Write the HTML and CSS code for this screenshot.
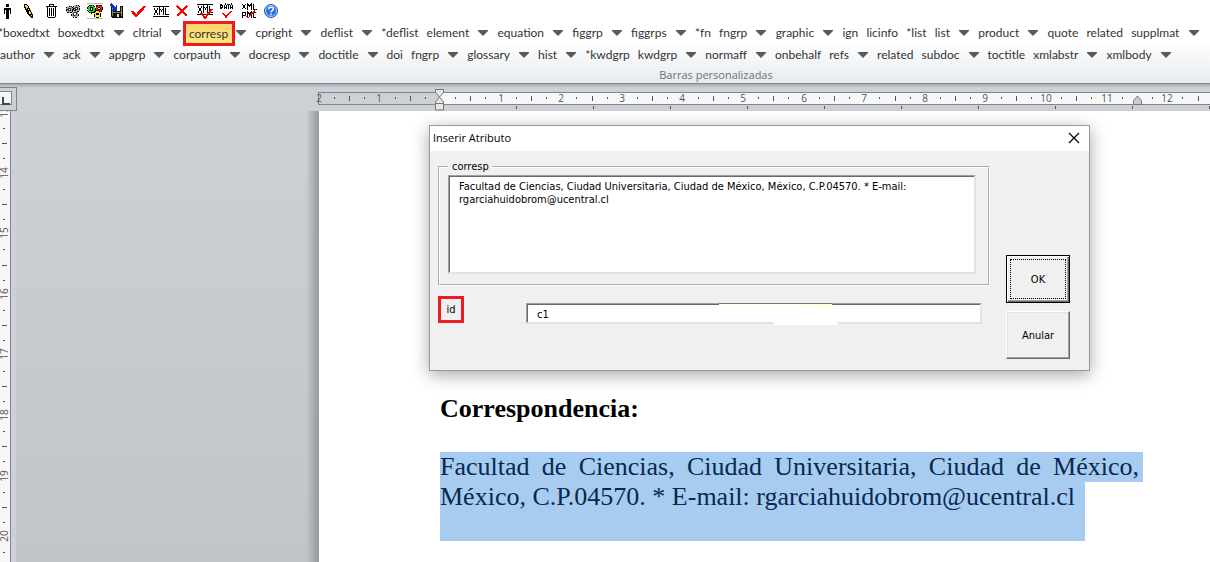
FILE: index.html
```html
<!DOCTYPE html>
<html lang="es">
<head>
<meta charset="utf-8">
<title>Inserir Atributo</title>
<link rel="stylesheet" href="styles.css">
</head>
<body>
<header class="ribbon">
  <div class="icons">
    <button aria-label="Persona"><svg viewBox="0 0 16 16"><path d="M7 1h3v3h-3zM5 5h7v6h-1v-4h-1v9h-3v-9h-1v4h-1z" fill="#000"/></svg></button>
    <button aria-label="Lápiz"><svg viewBox="0 0 16 16"><path d="M3 1h3l2 3 2 4 2 4v3h-2l-3-3-2-4-2-4z" fill="#000"/><path d="M4 2h2l2 4 2 4 1 3-2-1-2-4-2-3z" fill="#f5dc3c"/><path d="M5 7l3-2M6 9l3-2M9 12l2-1" stroke="#000"/></svg></button>
    <button aria-label="Borrar"><svg viewBox="0 0 16 16"><path d="M6.500 2.500v-1h4v1M3 3.500h11M4.500 4v9.500l1 1h6l1-1V4M6.500 5v8M8.500 5v8M10.500 5v8" fill="none" stroke="#000"/></svg></button>
    <button aria-label="Procesos"><svg viewBox="0 0 16 16"><g fill="#aaa" stroke="#000" stroke-dasharray="2 1"><circle cx="4.500" cy="6.500" r="3.500"/><circle cx="11.500" cy="5.500" r="3.500"/><circle cx="10" cy="11" r="3.500"/></g><g fill="#eee" stroke="#333"><circle cx="4.500" cy="6.500" r="1.500"/><circle cx="11.500" cy="5.500" r="1.500"/><circle cx="10" cy="11" r="1.500"/></g></svg></button>
    <button aria-label="Procesar"><svg viewBox="0 0 16 16"><path d="M0 .5h16M0 15.500h16" stroke="#b8b8b8"/><g stroke="#000" stroke-dasharray="3 1"><circle cx="4.500" cy="6" r="4" fill="#18d818"/><circle cx="12" cy="5.500" r="3.500" fill="#f01818"/><circle cx="10.500" cy="11" r="3.500" fill="#ffe51a"/></g><g fill="#fff" stroke="#000"><circle cx="4.500" cy="6" r="1.500"/><circle cx="12" cy="5.500" r="1.200"/><circle cx="10.500" cy="11" r="1"/></g></svg></button>
    <button aria-label="Guardar"><svg viewBox="0 0 16 16"><path d="M2 3h12v12h-11l-1-1z" fill="#111"/><path d="M5 3h6v5h-6z" fill="#fff"/><path d="M3 4h1v9h-1zM12 4h1v9h-1zM4 9h8v1h-8z" fill="#8c8c28"/><path d="M8 11h2v3h-2z" fill="#ddd"/><path d="M2 0l5 4V2h1v6H3V7h2L1 2z" fill="#1030d8"/></svg></button>
    <button aria-label="Validar"><svg viewBox="0 0 16 16"><path d="M1 8l4 5L14 3" fill="none" stroke="#f00" stroke-width="2.500"/></svg></button>
    <button aria-label="XML"><svg viewBox="0 0 16 16"><path d="M0 3.500h16M0 13.500h16M1 5l4 7M5 5l-4 7M6.500 12V5l2 3 2-3v7M12.500 5v6.500H16" fill="none" stroke="#000"/></svg></button>
    <button aria-label="Cancelar"><svg viewBox="0 0 16 16"><path d="M2 3l10 10M12 3L2 13" stroke="#f00" stroke-width="1.500"/></svg></button>
    <button aria-label="Validar XML"><svg viewBox="0 0 16 16"><path d="M0 1.500h16M0 11.500h16M1 3l4 7M5 3l-4 7M6.500 10V3l2 3 2-3v7M12.500 3v6.500H16" fill="none" stroke="#000"/><path d="M4 10l4 5 7-9" fill="none" stroke="#f00" stroke-width="2"/></svg></button>
    <button aria-label="Validar datos"><svg viewBox="0 0 16 16"><path d="M1.500 1v5M1 1.500h1l1 1v2l-1 1h-1M5.500 6V3l1-2 1 2v3M5 4.500h3M8 1.500h3M9.500 1v5M11.500 6V3l1-2 1 2v3M11 4.500h3" fill="none" stroke="#000"/><path d="M4 10l3 4 5-6" fill="none" stroke="#f00" stroke-width="1.500"/></svg></button>
    <button aria-label="XML PMC"><svg viewBox="0 0 16 16"><path d="M1 1l4 5M5 1L1 6M6.500 6.500V1l2 2 2-2v5.500M12.500 1v5.500H16M1.500 15V9H4v3H2M6.500 15V9l2 2 2-2v6M15 9.500h-2.500v5H15" fill="none" stroke="#000"/><path d="M4 12l3 3 8-9" fill="none" stroke="#f00" stroke-width="1.200"/></svg></button>
    <button aria-label="Ayuda"><svg class="smooth" viewBox="0 0 16 16"><circle cx="8" cy="8" r="6.500" fill="#2873d9" stroke="#1c54b4"/><circle cx="8" cy="8" r="5.500" fill="none" stroke="#b4d4ff"/><path d="M5.800 6.300c0-3 4.500-2.700 4.500-.2 0 1.700-2.200 1.500-2.200 3.400M8 10.700v1.500" fill="none" stroke="#fff" stroke-width="1.500"/></svg></button>
  </div>
  <nav class="tags tags-first" data-tags="*boxedtxt boxedtxt+ cltrial+ corresp+ cpright+ deflist+ *deflist element+ equation+ figgrp+ figgrps+ *fn fngrp+ graphic+ ign licinfo *list list+ product+ quote related supplmat+"></nav>
  <nav class="tags tags-second" data-tags="author+ ack+ appgrp+ corpauth+ docresp+ doctitle+ doi fngrp+ glossary+ hist+ *kwdgrp kwdgrp+ normaff+ onbehalf refs+ related subdoc+ toctitle xmlabstr+ xmlbody+"></nav>
  <div class="group-name">Barras personalizadas</div>
</header>
<main class="workspace">
  <div class="ruler-row">
    <div class="corner"><button class="tab-kind" aria-label="Tabulación izquierda"></button></div>
    <svg class="ruler-h" id="ruler-h"></svg>
  </div>
  <div class="sheet-row">
    <svg class="ruler-v" id="ruler-v"></svg>
    <div class="backdrop"></div>
    <article class="page">
      <h1>Correspondencia:</h1>
      <p><span class="selected line-full">Facultad de Ciencias, Ciudad Universitaria, Ciudad de México,</span><span class="selected line-last">México, C.P.04570. * E-mail: rgarciahuidobrom@ucentral.cl</span></p>
    </article>
  </div>
</main>
<form class="dialog" role="dialog" aria-labelledby="dialog-title">
  <div class="title-bar">
    <span id="dialog-title">Inserir Atributo</span>
    <button type="button" class="close" aria-label="Cerrar"><svg viewBox="0 0 12 12"><path d="M1 1l10 10M11 1L1 11" stroke="#000" stroke-width="1.200"/></svg></button>
  </div>
  <div class="dialog-body">
    <div class="fields">
      <fieldset>
        <legend>corresp</legend>
        <textarea aria-label="corresp">Facultad de Ciencias, Ciudad Universitaria, Ciudad de México, México, C.P.04570. * E-mail: rgarciahuidobrom@ucentral.cl</textarea>
      </fieldset>
      <div class="attribute">
        <label for="attr-id">id</label>
        <div class="entry"><input id="attr-id" type="text" value="c1"><svg class="smudge" viewBox="0 0 120 22"><path d="M0 1h113v5h-9l-24-4H0z" fill="#ffffe1"/><path d="M0 .5h113" stroke="#77776a"/><path d="M55 19h64v3H55z" fill="#fff"/></svg></div>
      </div>
    </div>
    <div class="actions">
      <button type="submit" class="push default"><span>OK</span></button>
      <button type="button" class="push"><span>Anular</span></button>
    </div>
  </div>
</form>
<script src="app.js"></script>
</body>
</html>
```
FILE: styles.css
```css
* { box-sizing: border-box; }
body {
  margin: 0;
  height: 100vh;
  display: flex;
  flex-direction: column;
  overflow: hidden;
  font-family: "Open Sans", "Noto Sans", sans-serif;
  font-size: 11px;
  color: #333;
}
button { border: 0; padding: 0; background: none; font: inherit; color: inherit; }
svg { display: block; }

.ribbon {
  flex: none;
  background: linear-gradient(#fff 0, #fff 50%, #e7eaee 100%);
  border-bottom: 1px solid #81868f;
}
.icons { display: flex; gap: 8px; height: 22px; align-items: center; }
.icons button { width: 14px; display: flex; justify-content: center; }
.icons svg { width: 16px; height: 16px; flex: none; shape-rendering: crispEdges; }
.icons .smooth { shape-rendering: auto; }

.tags { display: flex; height: 22px; align-items: center; justify-content: space-between; white-space: nowrap; font-family: Lato, "Open Sans", sans-serif; font-size: 12px; }
.tags-first { margin-left: -2px; padding-right: 6px; }
.tags-second { padding-right: 34px; }
.tag { padding: 0 4px; line-height: 20px; }
.tag:first-child { padding-left: 0; }
.drop { padding: 0 5px; }
.drop svg { width: 10px; height: 6px; }
.tag-active {
  border: 3px solid #ed1c24;
  padding: 0 4px 0 3px;
  line-height: 19px;
  margin: 0 -4px 0 -3px;
  background: linear-gradient(#fbd46e, #ffe97c);
}
.group-name { height: 17px; line-height: 17px; padding-left: 222px; text-align: center; color: #6b727d; }

.workspace {
  flex: 1;
  display: flex;
  flex-direction: column;
  min-height: 0;
  background: linear-gradient(#a9adb3 0, #cdd0d5 4px, #cdd0d5 20px, #c1c5ca 100%);
}
.ruler-row { display: flex; justify-content: space-between; padding-top: 3px; height: 27px; flex: none; }
.corner { width: 17px; border: 1px solid #7f858e; border-left: 0; padding: 3px 4px 5px 0; flex: none; }
.tab-kind { display: block; width: 12px; height: 14px; border: 1px solid #7f858e; border-left: 0; background: #f7f7f7; position: relative; }
.tab-kind::after { content: ""; position: absolute; left: 2px; top: 5px; width: 6px; height: 6px; border: solid #444; border-width: 0 0 2px 2px; }
.ruler-h { flex: 1; margin-left: 301px; height: 24px; overflow: visible; }
.sheet-row { flex: 1; display: flex; min-height: 0; }
.ruler-v { width: 11px; height: 100%; flex: none; background: #f7f7f7; border-right: 1px solid #7f858e; }
.ruler-row text, .ruler-v text { font-size: 10px; fill: #555; text-anchor: middle; }
.backdrop {
  width: 308px;
  flex: none;
  border-left: 5px solid #cdd1d6;
  border-right: 1px solid #9a9fa5;
  background: linear-gradient(to left, #989ca1, transparent 12px);
}
.page { flex: 1; background: #fff; padding: 283px 67px 0 121px; font-family: "Liberation Serif", serif; font-size: 26px; line-height: 30px; color: #000; min-width: 0; }
.page h1 { font-size: 26px; line-height: 30px; margin: 0 0 28px; }
.page p { margin: 0; }
.selected { display: block; background: #a8ccf0; color: #06294f; }
.line-full { padding-right: 4px; text-align: justify; text-align-last: justify; height: 30px; }
.line-last { width: 645px; height: 59px; white-space: nowrap; }

.dialog {
  position: absolute;
  left: 429px;
  top: 125px;
  width: 661px;
  border: 1px solid #989898;
  background: #f0f0f0;
  box-shadow: 0 4px 16px rgba(0, 0, 0, 0.35);
  font-family: "DejaVu Sans Condensed", "DejaVu Sans", sans-serif;
  font-size: 11px;
  color: #000;
}
.title-bar { display: flex; justify-content: space-between; align-items: center; height: 25px; padding: 0 9px 2px 3px; background: #fff; font-family: "Open Sans", sans-serif; font-size: 11px; }
.close svg { width: 12px; height: 12px; }
.dialog-body { display: flex; justify-content: space-between; padding: 9px 19px 11px 8px; }
.fields { width: 552px; }
fieldset { margin: 0; padding: 2px 12px 10px 8px; border: 2px groove #fff; }
legend { padding: 0 4px; line-height: 13px; }
textarea, input { font: inherit; color: #000; background: #fff; border: 2px solid; border-color: #a0a0a0 #e3e3e3 #e3e3e3 #a0a0a0; box-shadow: inset 1px 1px #696969; border-width: 1px 2px 2px 1px; outline: 0; }
textarea { display: block; width: 100%; height: 99px; padding: 4px 60px 0 10px; line-height: 13px; resize: none; overflow: hidden; white-space: pre-wrap; }
.attribute { display: flex; align-items: flex-start; justify-content: space-between; padding-top: 10px; }
.attribute label { border: 3px solid #ed1c24; width: 26px; height: 27px; line-height: 21px; text-align: center; }
.entry { position: relative; width: 456px; margin: 7px 8px 0 0; }
.entry input { display: block; width: 100%; height: 21px; padding: 2px 10px 0; }
.smudge { position: absolute; left: 193px; top: 0; width: 120px; height: 22px; }
.actions { width: 64px; padding-top: 95px; display: flex; flex-direction: column; gap: 8px; }
.push { height: 48px; border: 1px solid; border-color: #fff #696969 #696969 #fff; box-shadow: inset -1px -1px #a0a0a0, inset 1px 1px #e3e3e3; background: #f0f0f0; }
.default { border-color: #000; box-shadow: inset 1px 1px #fff, inset -1px -1px #696969, inset -2px -2px #a0a0a0; padding: 3px; }
.default span { display: flex; height: 100%; align-items: center; justify-content: center; border: 1px dotted #000; }
```
FILE: app.js
```js
const arrow = '<button class="drop" aria-label="Abrir"><svg viewBox="0 0 10 6"><path d="M0 0h10v1L5 6 0 1z" fill="#5a5a5a"/></svg></button>';
document.querySelectorAll('.tags').forEach(bar => {
  bar.innerHTML = bar.dataset.tags.split(' ').map(tag => {
    const name = tag.replace('+', '');
    const kind = name === 'corresp' ? 'tag tag-active' : 'tag';
    return `<button class="${kind}">${name}</button>` + (tag.endsWith('+') ? arrow : '');
  }).join('');
});

// One ruler unit, in pixels.
const unit = 60.6;

function horizontalRuler(width) {
  const zero = 122;
  let out = `<rect x="0.5" y="5.5" width="${width}" height="12" fill="#cdd0d5" stroke="#7f858e"/>` +
    `<rect x="${zero}" y="6" width="${width - zero}" height="11" fill="#f7f7f7"/>`;
  for (let q = -8; zero + q * unit / 4 < width - 5; q++) {
    const x = Math.round(zero + q * unit / 4);
    if (q % 4 === 0) {
      if (q) out += `<text x="${x}" y="15">${Math.abs(q / 4)}</text>`;
    } else {
      const half = q % 2 === 0;
      out += `<rect x="${x}" y="${half ? 9 : 10}" width="1" height="${half ? 5 : 2}" fill="#555"/>`;
    }
  }
  for (let x = zero + 76; x < width; x += 77) out += `<rect x="${x}" y="19" width="1" height="3" fill="#555"/>`;
  out += `<g transform="translate(${zero - 5} 2)" fill="#e6e6e6" stroke="#777"><path d="M.5.5h8v3l-4 4.500-4-4.500zM4.500 8l4 5v8h-8v-8zM.5 14.500h8"/></g>`;
  out += '<path d="M815.500 17.500v-4l4-4.500 4 4.500v4z" fill="#ccc" stroke="#777"/>';
  return out;
}

function verticalRuler(height) {
  let out = '';
  for (let q = 0; q * unit / 4 < height - 2; q++) {
    const y = Math.round(1 + q * unit / 4);
    if (q % 4 === 0) {
      out += `<text transform="translate(8 ${y}) rotate(-90)">${13 + q / 4}</text>`;
    } else {
      const half = q % 2 === 0;
      out += `<rect x="${half ? 2 : 3}" y="${y + 1}" width="${half ? 5 : 2}" height="1" fill="#555"/>`;
    }
  }
  return out;
}

function drawRulers() {
  const across = document.getElementById('ruler-h');
  const down = document.getElementById('ruler-v');
  across.innerHTML = horizontalRuler(across.getBoundingClientRect().width);
  down.innerHTML = verticalRuler(down.getBoundingClientRect().height);
}
drawRulers();
window.addEventListener('resize', drawRulers);
```
